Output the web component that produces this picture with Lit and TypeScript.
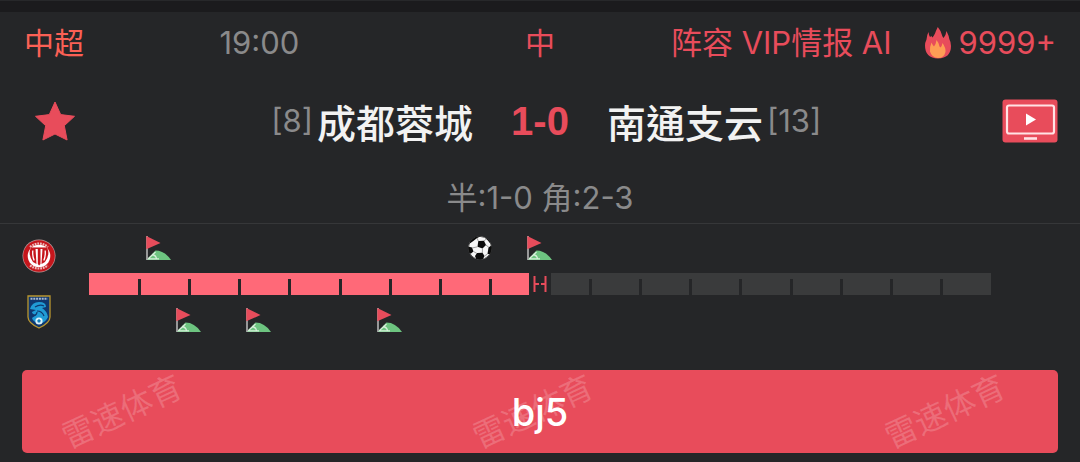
import { LitElement, html, svg, css } from "lit";
import { customElement, property } from "lit/decorators.js";

type EventKind = "corner" | "goal";
interface MatchEvent {
  minute: number;
  kind: EventKind;
}

const MATCH_MINUTES = 90;
const HOME_EVENTS: MatchEvent[] = [
  { minute: 7, kind: "corner" },
  { minute: 39, kind: "goal" },
  { minute: 45, kind: "corner" },
];
const AWAY_EVENTS: MatchEvent[] = [
  { minute: 10, kind: "corner" },
  { minute: 17, kind: "corner" },
  { minute: 30, kind: "corner" },
];
const WATERMARKS = [9.7, 49.3, 89.1];

const cornerIcon = html`<svg width="26" height="24" viewBox="0 0 26 24" role="img" aria-label="角球">
  <path d="M.5 24 9.500 14.500q9 0 15.500 9.500z" fill="#6dc480" />
  <path d="M2 22.800H13M2.500 22.500 9.500 16M6 18.500q4 .5 4.500 4.200" fill="none" stroke="#d5efd9" stroke-width="1.300" />
  <path d="M1 0v24" stroke="#c9c9c9" stroke-width="1.400" />
  <path d="M.3 0 14.500 7 .3 13.300z" fill="#e84c5b" />
</svg>`;

const goalIcon = html`<svg width="24" height="24" viewBox="0 0 24 24" role="img" aria-label="进球">
  <defs><clipPath id="ball"><circle cx="12" cy="12" r="11.800" /></clipPath></defs>
  <g clip-path="url(#ball)">
    <circle cx="12" cy="12" r="12" fill="#f6f6f6" />
    <g fill="#0b0b0b">
      <path d="M10.300 5 16 4.800 18 9 14.500 12.500 9.500 10.800z" />
      <path d="M3 0 13 0 9.500 1.800 5 5.200 1 8z" />
      <path d="M16 0 24 5 23 8 18.500 3z" />
      <path d="M0 10.500 4 11.500 5.500 15.500 3 17.500 0 17z" />
      <path d="M20.500 11.500 24 9 24 18 19.500 18z" />
      <path d="M9 17 14.500 16.800 16.500 20 14.500 24 8.500 24 7 20z" />
    </g>
    <circle cx="12" cy="12" r="11.600" fill="none" stroke="#111" stroke-width=".8" />
    <path d="M10.300 5 9 2M16 4.800 18.500 3M18 9 21 11.500M14.500 12.500 14.300 17M9.500 10.800 4 12M5.500 15.500 9 17.500M16.500 20 19.500 18" fill="none" stroke="#8a8a8a" stroke-width=".8" />
  </g>
</svg>`;

@customElement("match-track")
export class MatchTrack extends LitElement {
  static styles = css`
    :host { display: flex; flex-direction: column; gap: 13px; }
    .lane { position: relative; height: 24px; }
    .event { position: absolute; top: 0; transform: translateX(-50%); line-height: 0; }
    .bar { position: relative; display: grid; grid-template-columns: repeat(18, 1fr); height: 22px; }
    .slot { background: #3a3b3c; display: flex; align-items: flex-end; justify-content: flex-end; }
    .played { background: #ff6978; }
    .slot::after { content: ""; width: 3px; height: 16px; margin-right: -2px; background: #252628; z-index: 1; }
    .slot:last-of-type::after { display: none; }
    .half {
      position: absolute; z-index: 2; top: 0; bottom: 0; left: 50%; width: 22px;
      transform: translateX(-50%); background: #252628;
      display: flex; align-items: center; justify-content: center;
    }
  `;

  @property({ type: Number }) elapsed = 45;

  private lane(events: MatchEvent[]) {
    return html`<div class="lane">
      ${events.map(
        (e) => html`<span class="event" style="left:${(e.minute / MATCH_MINUTES) * 100}%">
          ${e.kind === "goal" ? goalIcon : cornerIcon}
        </span>`
      )}
    </div>`;
  }

  render() {
    return html`
      ${this.lane(HOME_EVENTS)}
      <div class="bar">
        ${Array.from({ length: 18 }, (_, i) => html`<div class="slot ${i * 5 < this.elapsed ? "played" : ""}"></div>`)}
        <span class="half">
          <svg width="16" height="18" viewBox="0 0 16 18" role="img" aria-label="中场" fill="none" stroke="#e84c5b" stroke-width="2">
            <path d="M2.500 1v16M13.500 1v16M3 9h4M9 9h4.500" />
          </svg>
        </span>
      </div>
      ${this.lane(AWAY_EVENTS)}
    `;
  }
}

@customElement("app-root")
export class AppRoot extends LitElement {
  static styles = css`
    :host {
      display: block;
      min-height: 100vh;
      box-sizing: border-box;
      background: #252628;
      color: #8a8a8b;
      font: 400 31px/36px Inter, "Noto Sans CJK SC", sans-serif;
      border-top: 1px solid #27282a;
    }
    button { font: inherit; color: inherit; border: 0; padding: 0; background: none; cursor: pointer; line-height: 0; }
    .strip { height: 11px; background: #1b1b1d; }
    .info { display: grid; grid-template-columns: 1fr auto 1fr; align-items: center; height: 62px; padding: 0 24px; white-space: nowrap; }
    .when { display: flex; }
    .league { flex: 0 0 39%; color: #fb6055; }
    .cn { font-size: 30px; }
    .accent { color: #e84c5b; }
    .extras { display: flex; align-items: center; justify-content: flex-end; }
    .flame { margin: 0 7px 0 32px; }
    .teams {
      display: grid; grid-template-columns: 56px 1fr auto 1fr 56px; align-items: center;
      height: 94px; padding: 0 22px; white-space: nowrap;
    }
    .star { justify-self: center; padding-left: 10px; }
    .side { display: flex; align-items: center; gap: 4px; }
    .home { justify-content: flex-end; }
    .name { font-family: "Noto Sans CJK TC", sans-serif; font-weight: 500; font-size: 39px; line-height: 48px; color: #f2f2f2; }
    .score { margin: 0 38px; color: #e84c5b; font: 700 40px/48px "Liberation Sans", sans-serif; }
    .partial { padding: 12px 0 7px; text-align: center; border-bottom: 1px solid #363739; }
    .timeline { display: grid; grid-template-columns: 34px 1fr; gap: 33px; padding: 12px 89px 38px 22px; }
    .crests { display: flex; flex-direction: column; align-items: center; gap: 22px; padding-top: 3px; line-height: 0; }
    .cta {
      position: relative; display: block; width: calc(100% - 44px); height: 83px; margin: 0 22px;
      border-radius: 5px; background: #e84c5b; color: #fff;
      font-size: 38px; font-weight: 500; line-height: 48px;
    }
    .label { position: relative; }
    .mark {
      position: absolute; top: 50%; transform: translate(-50%, -50%) rotate(-25deg);
      color: rgba(255, 255, 255, 0.19); font-size: 32px; line-height: 28px; font-weight: 400; white-space: nowrap;
    }
  `;

  private chengduCrest() {
    return svg`<svg width="34" height="34" viewBox="0 0 34 34" role="img" aria-label="成都蓉城">
      <circle cx="17" cy="17" r="16.500" fill="#b99a9b"/>
      <circle cx="17" cy="17" r="15.800" fill="#c5161c"/>
      <path d="M8 8Q17 1 26 8M8 26.500q9 6 18 0" fill="none" stroke="#efb9b9" stroke-width="2.200" stroke-dasharray="1.800 .9"/>
      <circle cx="17" cy="17" r="11.300" fill="#fff"/>
      <path d="M8.500 9.500h5L14.500 25l-3.500-2Q6 16 8.500 9.500ZM15.800 9h2.700v16l-1.400 1.500L15.800 25ZM20.500 9.500h5Q28 16 23 23l-3.500 2Z" fill="#c5161c"/>
      <path d="M9 9.200h16" stroke="#c5161c" stroke-width="1.500"/>
      <path d="M10.800 11.500q-.5 6 1.400 10M23.200 11.500q.5 6-1.400 10" fill="none" stroke="#fff" stroke-width="1.300"/>
    </svg>`;
  }

  private nantongCrest() {
    return svg`<svg width="24" height="34" viewBox="0 0 24 34" role="img" aria-label="南通支云">
      <path d="M1 1h22v21q0 6-11 11Q1 28 1 22Z" fill="#10376e" stroke="#b9962f" stroke-width="1.300"/>
      <path d="M3.500 3.700h17" stroke="#a9b8cf" stroke-width="2" stroke-dasharray="2 .8"/>
      <path d="M3 14Q5 7 12 7q7 0 7 5l-4 1q5 3 6 9-2 5-8 7-7-2-8-6l4-3q-4-1-4-3l4-2Z" fill="#209bd5"/>
      <path d="M8 12q5-3 9-1M10 16q5 0 7 5M6 21q4-1 4-4" fill="none" stroke="#10376e" stroke-width="1.200"/>
      <circle cx="12" cy="26" r="3.600" fill="#d9f1fa"/>
      <path d="m12 24 1.800 1.400-.7 2.200h-2.200l-.7-2.200Z" fill="#167fb8"/>
    </svg>`;
  }

  render() {
    return html`
      <div class="strip"></div>
      <header class="info">
        <div class="when"><span class="league cn">中超</span><time>19:00</time></div>
        <span class="accent cn">中</span>
        <div class="extras accent">
          <span>阵容 VIP情报 AI</span>
          <svg class="flame" width="28" height="32" viewBox="0 0 28 32" role="img" aria-label="热度">
            <path d="M13.800 0q3.200 3.500 4.700 9.500l1 1.500q2.500-3 3-7 2.500 5 2.800 8 1.700 3 1.700 7 0 12-13 12.500Q1 31 1 18.500q0-3 1.500-6 .3-4.500 2-7.500.3 3 1.500 5l1.500-1q.5 1 1 1.500 1.500-2 2.500-4 .8-2.500 2.800-6.500Z" fill="#e84c5b"/>
            <path d="M12.500 13q2.500 3 3 6.500l1 1q1.500-1.500 2-4.500 3.500 5 3 9-1.500 6-7.500 6T6 24.500Q5.500 20 7.500 15.500q1 2.500 2.500 4 2-2.500 2.500-6.500Z" fill="#ff9d55"/>
          </svg>
          <span>9999+</span>
        </div>
      </header>
      <section class="teams">
        <button class="star" aria-label="收藏">
          <svg width="42" height="42" viewBox="0 0 42 42">
            <path d="m21 2 5.700 12.600 13.800 1.700-10.200 9.400 2.800 14.300L21 34 8.900 40l2.800-14.300L1.500 16.300l13.800-1.700Z" fill="#e84c5b" stroke="#e84c5b" stroke-linejoin="round"/>
          </svg>
        </button>
        <div class="side home"><span>[8]</span><span class="name">成都蓉城</span></div>
        <span class="score">1-0</span>
        <div class="side"><span class="name">南通支云</span><span>[13]</span></div>
        <button aria-label="视频直播">
          <svg width="56" height="44" viewBox="0 0 56 44">
            <rect x=".5" y=".5" width="55" height="43" rx="3" fill="#e84c5b"/>
            <rect x="5" y="6.500" width="47" height="28" rx="2" fill="none" stroke="#ffe3e5" stroke-width="2.200"/>
            <path d="M24 14.500v12l10-6Z" fill="#fff"/>
            <path d="M22 39.500h13" stroke="#ffe3e5" stroke-width="2.600"/>
          </svg>
        </button>
      </section>
      <div class="partial">半:1-0 角:2-3</div>
      <section class="timeline">
        <div class="crests">${this.chengduCrest()}${this.nantongCrest()}</div>
        <match-track .elapsed=${45}></match-track>
      </section>
      <button class="cta">
        ${WATERMARKS.map((x) => html`<span class="mark" aria-hidden="true" style="left:${x}%">雷速体育</span>`)}
        <span class="label">bj5</span>
      </button>
    `;
  }
}
